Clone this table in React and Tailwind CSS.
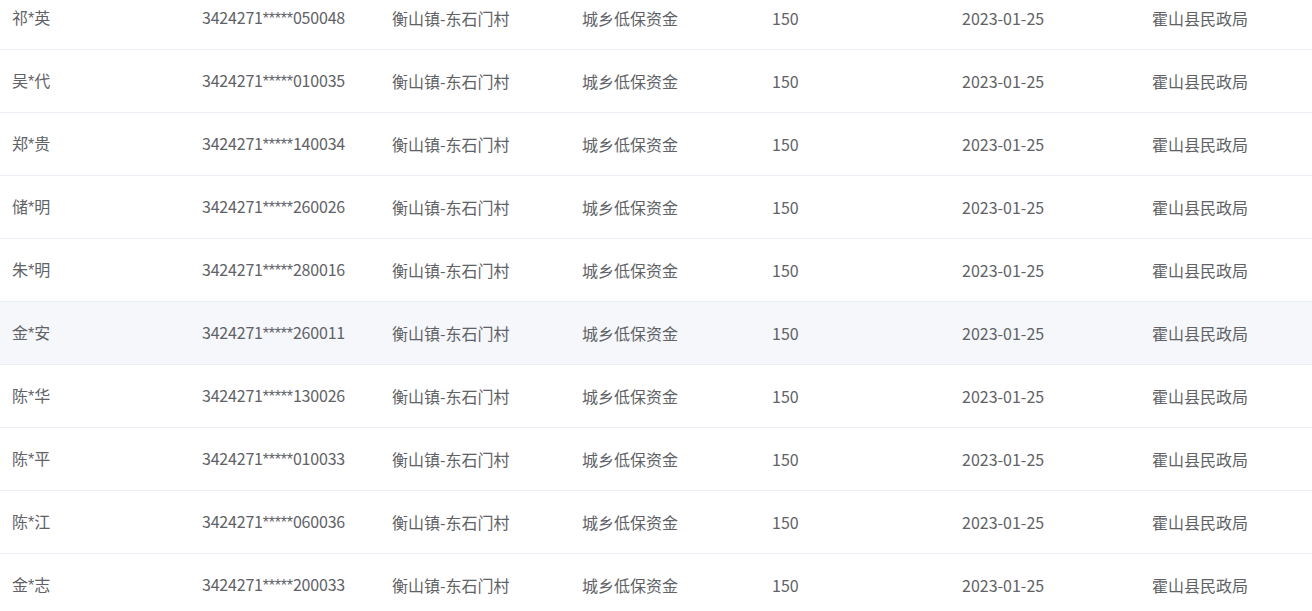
const rows = [
  ["祁", "英", "3424271", "050048"],
  ["吴", "代", "3424271", "010035"],
  ["郑", "贵", "3424271", "140034"],
  ["储", "明", "3424271", "260026"],
  ["朱", "明", "3424271", "280016"],
  ["金", "安", "3424271", "260011", true],
  ["陈", "华", "3424271", "130026"],
  ["陈", "平", "3424271", "010033"],
  ["陈", "江", "3424271", "060036"],
  ["金", "志", "3424271", "200033"],
];

const Star = ({ n }) => (
  <span style={{ fontFamily: '"Liberation Sans", sans-serif' }}>{"*".repeat(n)}</span>
);

export default function App() {
  return (
    <div className="w-[1312px] h-[611px] overflow-hidden bg-white">
      <div className="mt-[-13px] text-[16px] text-[#606266]" style={{ fontFamily: '"Noto Sans CJK SC", sans-serif' }}>
        {rows.map(([a, b, p, s, hl], i) => (
          <div key={i} className={`grid grid-cols-[190px_190px_190px_190px_190px_190px_172px] h-[63px] pb-[1px] items-center border-b border-[#ebeef5] ${hl ? "bg-[#f5f7fa]" : "bg-white"}`}>
            <div className="px-3">{a}<Star n={1} />{b}</div>
            <div className="px-3 tracking-[-0.2px]">{p}<Star n={5} />{s}</div>
            <div className="px-3">衡山镇-东石门村</div>
            <div className="px-3">城乡低保资金</div>
            <div className="px-3">150</div>
            <div className="px-3">2023-01-25</div>
            <div className="px-3">霍山县民政局</div>
          </div>
        ))}
      </div>
    </div>
  );
}
